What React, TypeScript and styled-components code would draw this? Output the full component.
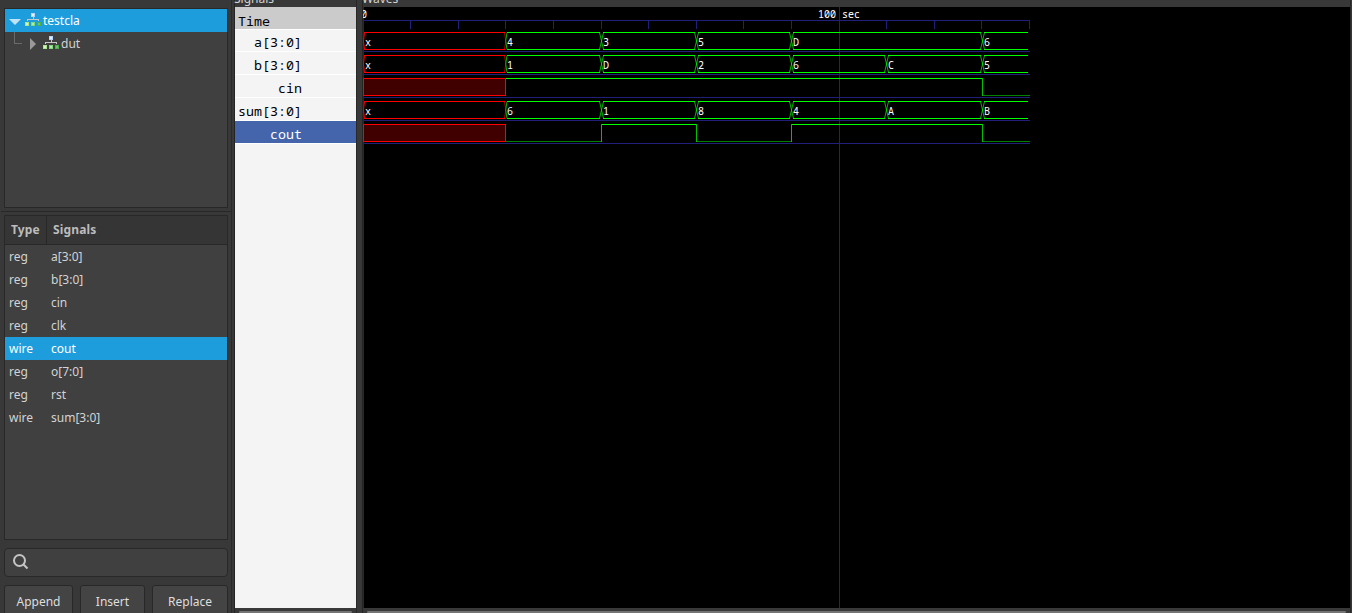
import React from "react";
import styled, { createGlobalStyle, css } from "styled-components";

const GlobalStyle = createGlobalStyle`
  * { box-sizing: border-box; }
  html, body { margin: 0; height: 100%; overflow: hidden; background: #383838; }
  body { font: 12px/23px "Noto Sans", sans-serif; color: #d3d3d3; }
`;

const mono = `"Noto Sans Mono", "DejaVu Sans Mono", monospace`;

const Window = styled.div`
  display: flex;
  width: 1352px;
  height: 613px;
  overflow: hidden;
  background: #383838;
`;

const Sidebar = styled.aside`
  display: flex;
  flex-direction: column;
  flex: none;
  width: 232px;
  height: 613px;
  padding-top: 8px;
  border-right: 1px solid #2a2a2a;
`;

const Panel = styled.section<{ $height: number }>`
  flex: none;
  width: 224px;
  height: ${(p) => p.$height}px;
  margin-left: 4px;
  border: 1px solid #282828;
  background: #404040;
`;

const Splitter = styled.div`
  flex: none;
  height: 1px;
  margin: 3px 0 3px 1px;
  background: #282828;
`;

const TreeRow = styled.div<{ $selected?: boolean }>`
  display: flex;
  align-items: center;
  height: 23px;
  padding-left: 4px;
  color: ${(p) => (p.$selected ? "#fff" : "#d3d3d3")};
  background: ${(p) => (p.$selected ? "#1e9ddd" : "transparent")};
`;

const Guide = styled.svg`
  flex: none;
  width: 14px;
  height: 23px;
  margin-left: 1px;
`;

const Arrow = styled.svg`
  flex: none;
  width: 13px;
  height: 14px;
`;

const Hierarchy = styled.svg<{ $gap: number }>`
  flex: none;
  width: 16px;
  height: 15px;
  margin: 0 2px 0 ${(p) => p.$gap}px;
`;

const columns = css`
  display: grid;
  grid-template-columns: 42px 1fr;
`;

const ListHeader = styled.div`
  ${columns}
  height: 29px;
  line-height: 28px;
  border-bottom: 1px solid #282828;
  background: #353535;
  color: #bcbcbc;
  font-weight: 700;
  letter-spacing: 0.15px;
`;

const HeadCell = styled.span`
  padding-left: 6px;
  & + & { border-left: 1px solid #282828; margin-left: -1px; }
`;

const ListRow = styled.div<{ $selected?: boolean }>`
  ${columns}
  height: 23px;
  color: ${(p) => (p.$selected ? "#fff" : "#d3d3d3")};
  background: ${(p) => (p.$selected ? "#1e9ddd" : "transparent")};
`;

const Cell = styled.span`
  padding-left: 4px;
`;

const Search = styled.div`
  display: flex;
  align-items: center;
  flex: none;
  width: 224px;
  height: 29px;
  margin: 8px 0 0 4px;
  padding: 0 0 2px 8px;
  border: 1px solid #282828;
  border-radius: 4px;
  background: #404040;
`;

const Buttons = styled.div`
  display: flex;
  gap: 7px;
  margin: 8px 0 0 4px;
`;

const Button = styled.button<{ $width: number }>`
  flex: none;
  width: ${(p) => p.$width}px;
  height: 34px;
  padding: 0;
  border: 1px solid #282828;
  border-radius: 3px;
  background: #444;
  color: #dedede;
  font: 12px/32px "Noto Sans", sans-serif;
`;

const Frame = styled.section<{ $width: number; $gap: number }>`
  display: flex;
  flex-direction: column;
  flex: none;
  width: ${(p) => p.$width}px;
  height: 613px;
  margin-left: ${(p) => p.$gap}px;
  border-left: 1px solid #242424;
  border-right: 1px solid #282828;
`;

const FrameTitle = styled.div`
  flex: none;
  height: 7px;
  overflow: hidden;
  display: flex;
  align-items: flex-end;
  color: #d3d3d3;
  line-height: 17px;
  margin-left: -1px;
`;

const SignalList = styled.div`
  flex: none;
  height: 601px;
  background: #f4f4f4;
  color: #000;
  font: 13.33px/26px ${mono};
`;

const TimeHeader = styled.div`
  height: 22px;
  padding-left: 3px;
  line-height: 29px;
  background: #cbcbcb;
`;

const SignalName = styled.div<{ $selected?: boolean }>`
  height: 23px;
  padding-right: 54px;
  border-top: 1px solid #fff;
  text-align: right;
  white-space: pre;
  color: ${(p) => (p.$selected ? "#fff" : "#000")};
  background: ${(p) => (p.$selected ? "#4464ac" : "transparent")};
  &:nth-child(2) { height: 22px; line-height: 25px; }
`;

const ListEnd = styled.div`
  height: 1px;
  background: #fff;
`;

const WaveCanvas = styled.svg`
  display: block;
  flex: none;
  background: #000;
  font: 10px ${mono};
`;

const ScrollBar = styled.div`
  height: 6px;
  margin: 3px 4px 0;
  border-radius: 3px;
  background: #747474;
`;

const Edge = styled.div`
  flex: 1;
  background: #383838;
`;

function HierarchyIcon({ gap }: { gap: number }) {
  return (
    <Hierarchy $gap={gap} viewBox="0 1 16 15" shapeRendering="crispEdges">
      <path d="M8 5v3M2.5 9V7.5h11V9" fill="none" stroke="#c8c8c8" />
      <rect x="6" y="1" width="4" height="4" fill="#b5d6fa" />
      <rect x="7" y="2" width="2" height="2" fill="#e2f0ff" />
      <rect x="0" y="10" width="4" height="4" fill="#a7e58e" />
      <rect x="1" y="11" width="2" height="2" fill="#d0f6be" />
      <rect x="6" y="10" width="4" height="4" fill="#82d879" />
      <rect x="7" y="11" width="2" height="2" fill="#aaf0a0" />
      <rect x="12" y="10" width="4" height="4" fill="#4aae4b" />
      <rect x="13" y="11" width="2" height="2" fill="#68c568" />
    </Hierarchy>
  );
}

const signals = [
  ["reg", "a[3:0]"],
  ["reg", "b[3:0]"],
  ["reg", "cin"],
  ["reg", "clk"],
  ["wire", "cout"],
  ["reg", "o[7:0]"],
  ["reg", "rst"],
  ["wire", "sum[3:0]"],
];

const traceNames = ["a[3:0]", "b[3:0]", "cin", "sum[3:0]", "cout"];

type Change = [number, string];
const END = 666;
const RED = "#f00";
const GREEN = "#0f0";
const GRID = "#20207a";

function Bus({ y, changes }: { y: number; changes: Change[] }) {
  return (
    <g>
      {changes.map(([x, value], i) => {
        const last = i === changes.length - 1;
        const end = last ? END : changes[i + 1][0];
        const unknown = value === "x";
        const color = unknown ? RED : GREEN;
        const start = i ? x + 2 : 1;
        const stop = last ? 665 : unknown ? end : end - 1;
        return (
          <g key={x}>
            <path
              d={`M${start} ${y + 0.5}H${stop}M${start} ${y + 17.5}H${stop}`}
              stroke={color}
              shapeRendering="crispEdges"
            />
            {i === 0 && (
              <path d={`M1.5 ${y + 0.5}L.5 ${y + 9}L1.5 ${y + 17.5}`} fill="none" stroke={RED} />
            )}
            {!last && (
              <path
                d={
                  unknown
                    ? `M${end - 0.5} ${y + 0.5}L${end + 0.8} ${y + 9}L${end - 0.5} ${y + 17.5}`
                    : `M${end - 1.5} ${y + 0.5}L${end + 2.5} ${y + 17.5}M${end - 1.5} ${y + 17.5}L${end + 2.5} ${y + 0.5}`
                }
                fill="none"
                stroke={unknown ? RED : GREEN}
                opacity=".7"
              />
            )}
            {i === 1 && (
              <path d={`M${x + 2} ${y + 0.5}L${x + 0.7} ${y + 9}L${x + 2} ${y + 17.5}`} fill="none" stroke="#00b400" />
            )}
            <text x={x + 2} y={y + 14} fill="#fff">
              {value}
            </text>
          </g>
        );
      })}
    </g>
  );
}

function Bit({ y, levels }: { y: number; levels: [number, number][] }) {
  return (
    <g shapeRendering="crispEdges" fill="none">
      {levels.map(([x, level], i) => {
        const end = i < levels.length - 1 ? levels[i + 1][0] : END;
        const lineY = y + (level ? 0.5 : 17.5);
        return (
          <g key={x}>
            <path d={`M${x} ${lineY}H${end + 1}`} stroke={level ? GREEN : "#008000"} />
            {i > 0 && <path d={`M${x + 0.5} ${y}v18`} stroke="#00c000" />}
          </g>
        );
      })}
      <rect x=".5" y={y + 0.5} width="142" height="17" fill="#400000" stroke={RED} />
    </g>
  );
}

const ticks = [47, 95, 142, 190, 238, 285, 333, 380, 428, 476, 523, 571, 618, 666];

function Waves() {
  return (
    <WaveCanvas width="987" height="601" viewBox="0 7 987 601">
      <g stroke={GRID} shapeRendering="crispEdges">
        <path d="M.5 7V608M476.5 7V608M0 20.5H667" />
        {ticks.map((x) => (
          <path key={x} d={`M${x + 0.5} 20v9`} />
        ))}
        {[51, 74, 97, 120, 143].map((y) => (
          <path key={y} d={`M0 ${y + 0.5}H667`} />
        ))}
      </g>
      <text x="-2" y="18" fill="#fff">0</text>
      <text x="455" y="18" fill="#fff">100</text>
      <text x="479" y="18" fill="#fff">sec</text>
      <Bus y={32} changes={[[0, "x"], [142, "4"], [238, "3"], [333, "5"], [428, "D"], [619, "6"]]} />
      <Bus y={55} changes={[[0, "x"], [142, "1"], [238, "D"], [333, "2"], [428, "6"], [523, "C"], [619, "5"]]} />
      <Bit y={78} levels={[[142, 1], [619, 0]]} />
      <Bus y={101} changes={[[0, "x"], [142, "6"], [238, "1"], [333, "8"], [428, "4"], [523, "A"], [619, "B"]]} />
      <Bit y={124} levels={[[142, 0], [238, 1], [333, 0], [428, 1], [619, 0]]} />
    </WaveCanvas>
  );
}

export default function App() {
  return (
    <Window>
      <GlobalStyle />
      <Sidebar>
        <Panel $height={200}>
          <TreeRow $selected>
            <Arrow viewBox="0 0 13 14">
              <path d="M0 5h12L6 11z" fill="#bfe3f5" />
            </Arrow>
            <HierarchyIcon gap={3} />
            testcla
          </TreeRow>
          <TreeRow>
            <Guide viewBox="0 0 14 23" shapeRendering="crispEdges">
              <path d="M4.500 0v11.500h7.500" fill="none" stroke="#6a6a6a" />
            </Guide>
            <Arrow viewBox="0 0 13 14">
              <path d="M6 1v12l6-6z" fill="#999" />
            </Arrow>
            <HierarchyIcon gap={6} />
            dut
          </TreeRow>
        </Panel>
        <Splitter />
        <Panel $height={325}>
          <ListHeader>
            <HeadCell>Type</HeadCell>
            <HeadCell>Signals</HeadCell>
          </ListHeader>
          {signals.map(([type, name]) => (
            <ListRow key={name} $selected={name === "cout"}>
              <Cell>{type}</Cell>
              <Cell>{name}</Cell>
            </ListRow>
          ))}
        </Panel>
        <Search>
          <svg width="16" height="16" viewBox="0 0 16 16" fill="none" stroke="#c4c4c4" strokeWidth="2">
            <circle cx="6.500" cy="6.500" r="5.500" />
            <path d="M10.500 10.500l4 4" />
          </svg>
        </Search>
        <Buttons>
          <Button $width={69}>Append</Button>
          <Button $width={65}>Insert</Button>
          <Button $width={76}>Replace</Button>
        </Buttons>
      </Sidebar>
      <Frame $width={123} $gap={2}>
        <FrameTitle>Signals</FrameTitle>
        <SignalList>
          <TimeHeader>Time</TimeHeader>
          {traceNames.map((name) => (
            <SignalName key={name} $selected={name === "cout"}>
              {name}
            </SignalName>
          ))}
          <ListEnd />
        </SignalList>
        <ScrollBar />
      </Frame>
      <Frame $width={989} $gap={5}>
        <FrameTitle>Waves</FrameTitle>
        <Waves />
        <ScrollBar />
      </Frame>
      <Edge />
    </Window>
  );
}
